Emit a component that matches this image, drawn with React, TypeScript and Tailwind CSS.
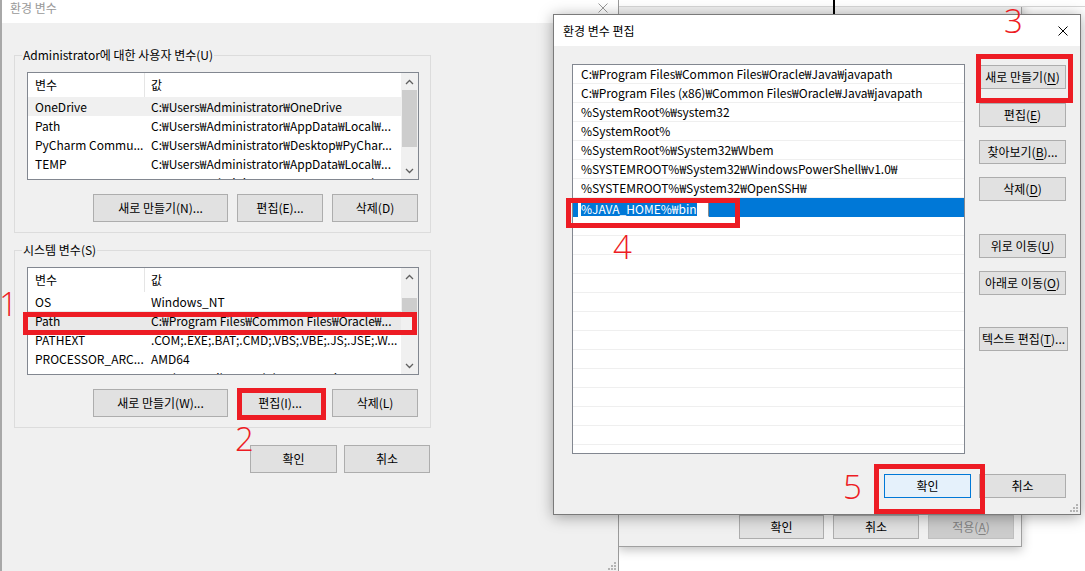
import React from "react";

const font = "font-['Noto_Sans_CJK_KR',sans-serif]";
const redBox = "pointer-events-none absolute border-[5px] border-[#ed1c24]";
const redNum =
  "pointer-events-none absolute font-['Open_Sans',sans-serif] text-[33px] font-light leading-none text-[#ed1c24]";

function Btn({
  children,
  className = "",
  tone = "normal",
}: {
  children: React.ReactNode;
  className?: string;
  tone?: "normal" | "default" | "disabled";
}) {
  const look =
    tone === "default"
      ? "border-[#0078d7] bg-[#e5f1fb] text-black"
      : tone === "disabled"
        ? "border-[#bfbfbf] bg-[#cccccc] text-[#838383]"
        : "border-[#adadad] bg-[#e1e1e1] text-black";
  return (
    <div
      className={`flex shrink-0 items-center justify-center whitespace-nowrap border text-[12px] leading-none ${look} ${className}`}
    >
      {children}
    </div>
  );
}

function Acc({ k }: { k: string }) {
  return (
    <>
      (<span className="underline underline-offset-[2px]">{k}</span>)
    </>
  );
}

function CloseX({ color }: { color: string }) {
  return (
    <svg width="10" height="10" viewBox="0 0 10 10">
      <path d="M0.5 0.5 L9.5 9.5 M9.5 0.5 L0.5 9.5" stroke={color} strokeWidth="1" />
    </svg>
  );
}

function Grip() {
  return (
    <svg width="8" height="8" viewBox="0 0 8 8" fill="#b4b4b4">
      <rect x="6" y="0" width="2" height="2" />
      <rect x="3" y="3" width="2" height="2" />
      <rect x="6" y="3" width="2" height="2" />
      <rect x="0" y="6" width="2" height="2" />
      <rect x="3" y="6" width="2" height="2" />
      <rect x="6" y="6" width="2" height="2" />
    </svg>
  );
}

function Chevron({ up }: { up?: boolean }) {
  return (
    <svg width="9" height="6" viewBox="0 0 9 6">
      <path
        d={up ? "M1 5 L4.5 1.5 L8 5" : "M1 1 L4.5 4.5 L8 1"}
        stroke="#606060"
        strokeWidth="1.3"
        fill="none"
      />
    </svg>
  );
}

type Row = { name: string; value: string };

function VarList({
  rows,
  sel,
  selBg,
  thumb,
}: {
  rows: Row[];
  sel: number;
  selBg: string;
  thumb: string;
}) {
  return (
    <div className="ml-[12px] flex h-[108px] w-[392px] border border-[#828790] bg-white">
      <div className="flex min-w-0 flex-1 flex-col overflow-hidden">
        <div className="flex h-[24px] shrink-0">
          <div className="flex w-[117px] shrink-0 items-center border-r border-[#e5e5e5] pl-[7px]">
            변수
          </div>
          <div className="flex items-center pl-[6px]">값</div>
        </div>
        {rows.map((r, i) => (
          <div
            key={r.name}
            className={`flex h-[19px] shrink-0 items-center whitespace-nowrap ${i === sel ? selBg : ""}`}
          >
            <div className="w-[116px] shrink-0 pl-[7px]">{r.name}</div>
            <div className="pl-[7px]">{r.value}</div>
          </div>
        ))}
      </div>
      <div className="flex w-[17px] shrink-0 flex-col bg-[#f0f0f0]">
        <div className="flex h-[17px] shrink-0 items-center justify-center">
          <Chevron up />
        </div>
        <div className="flex-1 px-[1px]">
          <div className={`bg-[#cdcdcd] ${thumb}`} />
        </div>
        <div className="flex h-[17px] shrink-0 items-center justify-center">
          <Chevron />
        </div>
      </div>
    </div>
  );
}

const userRows: Row[] = [
  { name: "OneDrive", value: "C:₩Users₩Administrator₩OneDrive" },
  { name: "Path", value: "C:₩Users₩Administrator₩AppData₩Local₩..." },
  { name: "PyCharm Commu...", value: "C:₩Users₩Administrator₩Desktop₩PyChar..." },
  { name: "TEMP", value: "C:₩Users₩Administrator₩AppData₩Local₩..." },
  { name: "TMP", value: "C:₩Users₩Administrator₩AppData₩Local₩..." },
];

const sysRows: Row[] = [
  { name: "OS", value: "Windows_NT" },
  { name: "Path", value: "C:₩Program Files₩Common Files₩Oracle₩..." },
  { name: "PATHEXT", value: ".COM;.EXE;.BAT;.CMD;.VBS;.VBE;.JS;.JSE;.W..." },
  { name: "PROCESSOR_ARC...", value: "AMD64" },
  { name: "PROCESSOR_IDE...", value: "Intel64 Family 6 Model 158 Stepping..." },
];

const pathRows = [
  "C:₩Program Files₩Common Files₩Oracle₩Java₩javapath",
  "C:₩Program Files (x86)₩Common Files₩Oracle₩Java₩javapath",
  "%SystemRoot%₩system32",
  "%SystemRoot%",
  "%SystemRoot%₩System32₩Wbem",
  "%SYSTEMROOT%₩System32₩WindowsPowerShell₩v1.0₩",
  "%SYSTEMROOT%₩System32₩OpenSSH₩",
];

function EnvDialog() {
  return (
    <div className="absolute left-0 top-0 flex h-[571px] w-[619px] flex-col border-l-2 border-r border-l-[#a8a8a8] border-r-[#9a9a9a] bg-[#f0f0f0]">
      <div className="flex h-[23px] shrink-0 items-center justify-between bg-white pb-[7px] pl-[8px] pr-[10px]">
        <span className="text-[12px] text-[#999999]">환경 변수</span>
        <CloseX color="#9a9a9a" />
      </div>
      <div className="flex flex-col pl-[12px]">
        <fieldset className="mt-[24px] w-[417px] border border-[#dcdcdc] pb-[10px] pt-[9px]">
          <legend className="ml-[7px] px-[1px] text-[12px] leading-[16px]">
            Administrator에 대한 사용자 변수(U)
          </legend>
          <VarList rows={userRows} sel={0} selBg="bg-[#f0f0f0]" thumb="mt-0 h-[57px]" />
          <div className="mt-[14px] flex justify-end gap-[9px] pr-[12px]">
            <Btn className="h-[28px] w-[135px]">새로 만들기(N)...</Btn>
            <Btn className="h-[28px] w-[86px]">편집(E)...</Btn>
            <Btn className="h-[28px] w-[86px]">삭제(D)</Btn>
          </div>
        </fieldset>
        <fieldset className="mt-[9px] w-[417px] border border-[#dcdcdc] pb-[10px] pt-[9px]">
          <legend className="ml-[7px] px-[1px] text-[12px] leading-[16px]">시스템 변수(S)</legend>
          <VarList rows={sysRows} sel={1} selBg="bg-[#e9e9e9]" thumb="mt-[13px] h-[18px]" />
          <div className="mt-[14px] flex justify-end gap-[9px] pr-[12px]">
            <Btn className="h-[28px] w-[135px]">새로 만들기(W)...</Btn>
            <Btn className="h-[28px] w-[86px]">편집(I)...</Btn>
            <Btn className="h-[28px] w-[86px]">삭제(L)</Btn>
          </div>
        </fieldset>
        <div className="mt-[17px] flex w-[417px] justify-end gap-[7px] pr-[1px]">
          <Btn className="h-[28px] w-[87px]">확인</Btn>
          <Btn className="h-[28px] w-[86px]">취소</Btn>
        </div>
      </div>
      <div className="mt-auto flex justify-end pb-[1px] pr-[2px]">
        <Grip />
      </div>
    </div>
  );
}

function SysPropsWindow() {
  return (
    <div className="absolute left-[618px] top-0 flex h-[547px] w-[404px] flex-col border border-t-0 border-[#a0a0a0] bg-[#f0f0f0] shadow-[0_3px_10px_rgba(0,0,0,0.25)]">
      <div className="h-[7px] shrink-0 border-b border-[#d6d6d6] bg-white" />
      <div className="mt-auto flex justify-end gap-[9px] pb-[7px] pr-[7px]">
        <Btn className="h-[24px] w-[85px]">확인</Btn>
        <Btn className="h-[24px] w-[86px]">취소</Btn>
        <Btn className="h-[24px] w-[86px]" tone="disabled">
          적용<Acc k="A" />
        </Btn>
      </div>
    </div>
  );
}

function EditDialog() {
  const empty = Array.from({ length: 12 }, (_, i) => i);
  return (
    <div className="absolute left-[553px] top-[14px] flex h-[501px] w-[528px] flex-col border border-[#7a7a7a] bg-[#f0f0f0] shadow-[0_2px_14px_rgba(0,0,0,0.35)]">
      <div className="flex h-[31px] shrink-0 items-center justify-between bg-white pl-[9px] pr-[12px]">
        <span className="text-[12px]">환경 변수 편집</span>
        <CloseX color="#000000" />
      </div>
      <div className="flex pl-[18px] pt-[18px]">
        <div className="h-[390px] w-[393px] overflow-hidden border border-[#828790] bg-white">
          {pathRows.map((p) => (
            <div
              key={p}
              className="flex h-[19px] items-center whitespace-nowrap border-b border-[#efefef] pl-[8px] text-[12px]"
            >
              {p}
            </div>
          ))}
          <div className="flex h-[19px] items-end bg-[#0078d7] pl-[5px]">
            <div className="flex h-[16px] w-[131px] items-start border border-white border-r-[#8a8a8a] bg-white pl-[2px]">
              <span className="bg-[#0078d7] text-[12px] leading-[14px] text-white">
                %JAVA_HOME%₩bin
              </span>
            </div>
          </div>
          {empty.map((i) => (
            <div key={i} className="h-[19px] border-b border-[#efefef]" />
          ))}
        </div>
        <div className="ml-[14px] flex flex-col">
          <Btn className="mt-[1px] h-[24px] w-[87px]">
            새로 만들기<Acc k="N" />
          </Btn>
          <Btn className="mt-[14px] h-[24px] w-[87px]">
            편집<Acc k="E" />
          </Btn>
          <Btn className="mt-[13px] h-[24px] w-[87px]">
            찾아보기<Acc k="B" />...
          </Btn>
          <Btn className="mt-[13px] h-[24px] w-[87px]">
            삭제<Acc k="D" />
          </Btn>
          <Btn className="mt-[33px] h-[24px] w-[87px]">
            위로 이동<Acc k="U" />
          </Btn>
          <Btn className="mt-[13px] h-[24px] w-[87px]">
            아래로 이동<Acc k="O" />
          </Btn>
          <Btn className="mt-[32px] h-[24px] w-[89px]">
            텍스트 편집<Acc k="T" />...
          </Btn>
        </div>
      </div>
      <div className="mt-[20px] flex justify-end gap-[8px] pr-[14px]">
        <Btn className="h-[24px] w-[87px]" tone="default">
          확인
        </Btn>
        <Btn className="h-[24px] w-[87px]">취소</Btn>
      </div>
      <div className="mt-auto flex justify-end pb-[2px] pr-[2px]">
        <Grip />
      </div>
    </div>
  );
}

export default function App() {
  return (
    <div className={`relative h-[571px] w-[1085px] overflow-hidden bg-white text-[12px] text-black ${font}`}>
      <SysPropsWindow />
      <div className="absolute left-[1021px] top-0 h-[7px] w-[64px] border-b border-[#d6d6d6] bg-white" />
      <div className="absolute left-[833px] top-0 h-[14px] w-[2px] bg-black" />
      <EnvDialog />
      <EditDialog />

      {/* annotations */}
      <div className={`${redBox} left-[23px] top-[312px] h-[23px] w-[394px]`} />
      <div className={`${redBox} left-[237px] top-[388px] h-[32px] w-[89px]`} />
      <div className={`${redBox} left-[976px] top-[54px] h-[49px] w-[97px]`} />
      <div className={`${redBox} left-[566px] top-[198px] h-[30px] w-[174px]`} />
      <div className={`${redBox} left-[874px] top-[464px] h-[50px] w-[111px]`} />
      <span className={`${redNum} left-[-1px] top-[287px]`}>1</span>
      <span className={`${redNum} left-[235px] top-[422px]`}>2</span>
      <span className={`${redNum} left-[1004px] top-[4px]`}>3</span>
      <span className={`${redNum} left-[613px] top-[230px]`}>4</span>
      <span className={`${redNum} left-[843px] top-[470px]`}>5</span>
    </div>
  );
}
